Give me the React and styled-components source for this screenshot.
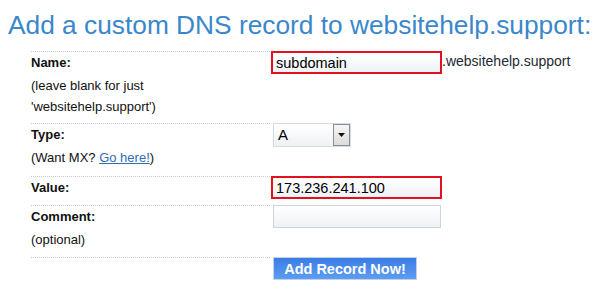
import styled, { createGlobalStyle } from "styled-components";

const GlobalStyle = createGlobalStyle`
  body {
    margin: 0;
    background: #ffffff;
    font-family: "Liberation Sans", Arial, sans-serif;
  }
`;

export default function App() {
  return (
    <Page>
      <GlobalStyle />
      <Title>Add a custom DNS record to websitehelp.support:</Title>
      <Form>
        <Row>
          <LabelCell>
            <Label>Name:</Label>
            <Hint>(leave blank for just</Hint>
            <Hint>'websitehelp.support')</Hint>
          </LabelCell>
          <FieldCell>
            <TextInput $error defaultValue="subdomain" />
            <Suffix>.websitehelp.support</Suffix>
          </FieldCell>
        </Row>

        <Row>
          <LabelCell $extra={2}>
            <Label>Type:</Label>
            <Hint>
              (Want MX? <Link href="#">Go here!</Link>)
            </Hint>
          </LabelCell>
          <FieldCell>
            <SelectBox>
              <SelectValue>A</SelectValue>
              <ArrowButton>
                <svg width="7" height="4" viewBox="0 0 7 4">
                  <path d="M0 0h7L3.5 4z" fill="#111" />
                </svg>
              </ArrowButton>
            </SelectBox>
          </FieldCell>
        </Row>

        <Row>
          <LabelCell $extra={-1}>
            <Label>Value:</Label>
          </LabelCell>
          <FieldCell>
            <TextInput $error defaultValue="173.236.241.100" />
          </FieldCell>
        </Row>

        <Row>
          <LabelCell $extra={1}>
            <Label>Comment:</Label>
            <Hint>(optional)</Hint>
          </LabelCell>
          <FieldCell>
            <TextInput defaultValue="" />
          </FieldCell>
        </Row>

        <Row>
          <LabelCell />
          <FieldCell>
            <SubmitButton type="button">Add Record Now!</SubmitButton>
          </FieldCell>
        </Row>
      </Form>
    </Page>
  );
}

const Page = styled.div`
  padding: 10px 8px 0;
`;

const Title = styled.h1`
  margin: 0 0 11px;
  font-size: 26.3px;
  line-height: 30px;
  font-weight: 400;
  color: #3a87cc;
  white-space: nowrap;
`;

const Form = styled.div`
  display: flex;
  flex-direction: column;
  margin-left: 23px;
  width: 560px;
`;

const Row = styled.div`
  display: grid;
  grid-template-columns: 239px 1fr;
`;

const LabelCell = styled.div`
  border-top: 1px dotted #c3ccd8;
  padding: 0 0 ${(p) => 6 + (p.$extra || 0)}px;
  font-size: 13px;
  line-height: 21px;
  color: #111111;
`;

const Label = styled.div`
  font-weight: 700;
  line-height: 22px;
  margin-bottom: 1px;
`;

const Hint = styled.div``;

const Link = styled.a`
  color: #2f6db5;
  text-decoration: underline;
`;

const FieldCell = styled.div`
  display: flex;
  align-items: flex-start;
  padding-left: 3px;
`;

const TextInput = styled.input`
  box-sizing: border-box;
  width: ${(p) => (p.$error ? "171px" : "168px")};
  height: 23px;
  margin: 0 0 0 ${(p) => (p.$error ? "-2px" : "0")};
  padding: 0 3px;
  border: ${(p) => (p.$error ? "2px solid #e3101d" : "1px solid #cbd5df")};
  border-radius: 0;
  background: linear-gradient(#ffffff, #eef2f6);
  font-family: "Liberation Sans", Arial, sans-serif;
  font-size: 14.5px;
  color: #000000;
  outline: none;
`;

const Suffix = styled.span`
  font-size: 14px;
  line-height: 20px;
  color: #222a33;
`;

const SelectBox = styled.div`
  box-sizing: border-box;
  display: flex;
  align-items: stretch;
  width: 78px;
  height: 24px;
  border: 1px solid #d3dbe4;
  background: linear-gradient(#ffffff, #eef2f6);
`;

const SelectValue = styled.span`
  flex: 1;
  padding-left: 4px;
  font-size: 15px;
  line-height: 22px;
  color: #000000;
`;

const ArrowButton = styled.span`
  box-sizing: border-box;
  display: flex;
  align-items: center;
  justify-content: center;
  width: 17px;
  border: 1px solid #8a8f96;
  background: linear-gradient(#f6f6f6, #dcdcdc);
`;

const SubmitButton = styled.button`
  box-sizing: border-box;
  width: 144px;
  height: 23px;
  padding: 0;
  border: 1px solid #c3d2e2;
  background: linear-gradient(#3a7ce6, #5d9df2);
  color: #ffffff;
  font-family: "Liberation Sans", Arial, sans-serif;
  font-size: 14.5px;
  font-weight: 700;
  cursor: pointer;
`;
